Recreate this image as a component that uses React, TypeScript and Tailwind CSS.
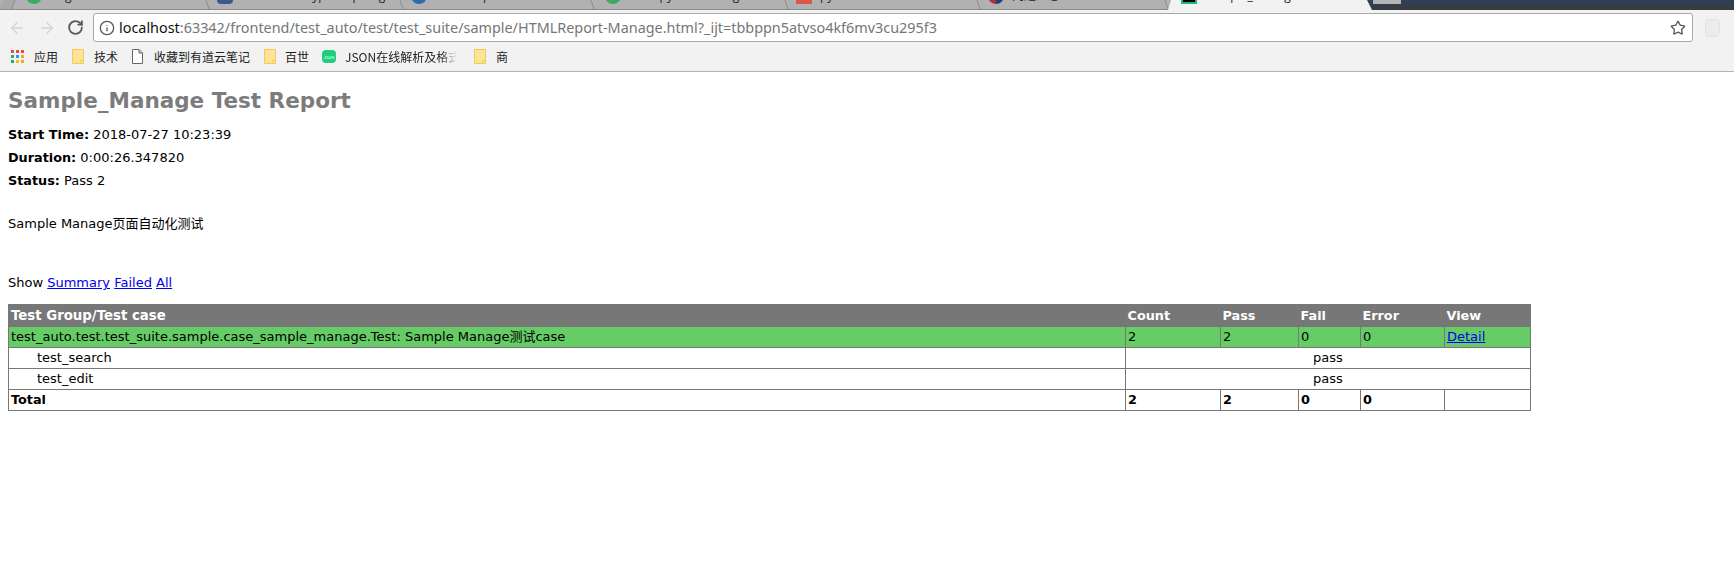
import { ArrowLeft, ArrowRight, Info, RotateCw, Star } from 'lucide-react';

const tabs = [
  { width: 'w-[196px]', pad: 'pl-[14px]', icon: 'bg-[#3dab5b] rounded-full', title: 'Angular' },
  { width: 'w-[194px]', pad: 'pl-[9px]', icon: 'bg-[#3a5a8c] rounded-sm', title: 'Handbook: TypeScript Cfg' },
  { width: 'w-[191px]', pad: 'pl-[9px]', icon: 'bg-[#2d6ca8] rounded-full', title: 'Bootstrap' },
  { width: 'w-[194px]', pad: 'pl-[12px]', icon: 'bg-[#3dab5b] rounded-full', title: '5000.py and Settings' },
  { width: 'w-[192px]', pad: 'pl-[9px]', icon: 'bg-[#d9584a]', title: 'py' },
  { width: 'w-[188px]', pad: 'pl-[9px]', icon: 'bg-[linear-gradient(90deg,#b0303a_50%,#1d3f7a_50%)] rounded-full', title: '问题汇总' },
];

function Folder() {
  return (
    <svg width="12" height="15" viewBox="0 0 12 15" className="shrink-0">
      <path d="M.5.5h11v14H.5z" fill="#fde395" stroke="#f0cc5c" />
      <path d="M8.5 14.5v-3h3" fill="none" stroke="#f0cc5c" />
    </svg>
  );
}

function AppsGrid() {
  const colors = [
    '#ea4a4a', '#ea4a4a', '#ea4a4a',
    '#34a868', '#3b8ef0', '#f5a623',
    '#34a868', '#fbbc05', '#f5a623',
  ];
  return (
    <div className="grid w-[13px] shrink-0 grid-cols-3 gap-[2px]">
      {colors.map((color, i) => (
        <span key={i} className="h-[3px]" style={{ backgroundColor: color }} />
      ))}
    </div>
  );
}

function TabStrip() {
  return (
    <div className="flex h-[10px] overflow-hidden text-[12px] leading-[14px] text-[#222] [font-family:'Open_Sans','Noto_Sans_CJK_SC',sans-serif]">
      <div className="flex w-[1168px] shrink-0 border-b border-[#8a8a8a] bg-[#b1b1b3]">
        <div className="w-[12px] shrink-0 origin-bottom -skew-x-[20deg] border-r border-[#8c8c8c] bg-[#a9a9a9]" />
        {tabs.map((tab) => (
          <div key={tab.title} className={`relative flex shrink-0 items-start gap-[8px] ${tab.width} ${tab.pad}`}>
            <span className={`-mt-[12px] size-[16px] shrink-0 ${tab.icon}`} />
            <span className="-mt-[11px] whitespace-nowrap">{tab.title}</span>
            <span className="absolute top-0 right-0 h-full w-px skew-x-[20deg] bg-[#8c8c8c]" />
          </div>
        ))}
      </div>
      <div className="w-[204px] shrink-0 bg-[linear-gradient(90deg,#b1b1b3_50%,#35404f_50%)]">
        <div className="flex h-full items-start gap-[9px] bg-[#f2f2f2] pl-[13px] [clip-path:polygon(0_100%,3px_0,calc(100%_-_5px)_0,100%_100%)]">
          <span className="-mt-[12px] box-border size-[16px] shrink-0 border-2 border-[#1fb58f] bg-black" />
          <span className="-mt-[11px] whitespace-nowrap">Sample_Manage</span>
        </div>
      </div>
      <div className="flex min-w-0 flex-1 bg-[linear-gradient(180deg,#2e4058,#3b3b3b)]">
        <div className="ml-[1px] h-[4px] w-[28px] bg-[#b4b4b6]" />
      </div>
    </div>
  );
}

function AddressBar() {
  return (
    <div className="flex h-[32px] items-end bg-[#f2f2f2]">
      <div className="flex h-[29px] w-[93px] shrink-0 items-center pl-[8px]">
        <ArrowLeft size={18} strokeWidth={2.2} color="#d6d6d6" />
        <ArrowRight size={18} strokeWidth={2.2} color="#d6d6d6" className="ml-[12px]" />
        <RotateCw size={17} strokeWidth={2.6} color="#5a5a5a" className="ml-[11px]" />
      </div>
      <div className="flex h-[29px] w-[1600px] items-center rounded-[3px] border border-[#a9a9a9] bg-white pr-[6px] pl-[5px]">
        <Info size={16} strokeWidth={2} color="#5a5a5a" className="shrink-0" />
        <span className="ml-[4px] whitespace-nowrap text-[14.4px] text-[#767676] [font-family:'Noto_Sans',sans-serif]">
          <span className="text-[#111]">localhost</span>:63342/frontend/test_auto/test/test_suite/sample/HTMLReport-Manage.html?_ijt=tbbppn5atvso4kf6mv3cu295f3
        </span>
        <Star size={16} strokeWidth={2} color="#5a5a5a" className="ml-auto shrink-0" />
      </div>
      <div className="mb-[5px] ml-[12px] h-[18px] w-[15px] rounded-[3px] rounded-br-[6px] border border-[#e2e2e2] bg-[#ececec]" />
    </div>
  );
}

function BookmarksBar() {
  return (
    <div className="flex h-[30px] items-center border-b border-[#b4b4b4] bg-[#f2f2f2] pl-[11px] text-[12px] text-[#222] [font-family:'Noto_Sans_CJK_SC',sans-serif]">
      <AppsGrid />
      <span className="ml-[10px] w-[24px]">应用</span>
      <span className="ml-[14px]"><Folder /></span>
      <span className="ml-[10px] w-[24px]">技术</span>
      <svg width="11" height="15" viewBox="0 0 11 15" className="ml-[14px] shrink-0">
        <path d="M.5.5h6.5l3.500 3.500v10.500h-10zM7 .5v3.500h3.500" fill="#fff" stroke="#666" />
      </svg>
      <span className="ml-[11px] w-[96px] whitespace-nowrap">收藏到有道云笔记</span>
      <span className="ml-[14px]"><Folder /></span>
      <span className="ml-[9px] w-[24px]">百世</span>
      <span className="ml-[13px] flex h-[13px] w-[14px] shrink-0 items-center justify-center rounded-[4px] bg-[#1fcf7c] text-[4px] text-white">JSON</span>
      <span className="ml-[9px] w-[112px] overflow-hidden whitespace-nowrap [mask-image:linear-gradient(90deg,#000_85%,transparent)]">JSON在线解析及格式化</span>
      <span className="ml-[17px]"><Folder /></span>
      <span className="ml-[10px]">商</span>
    </div>
  );
}

const cell = 'border border-[#777] px-[2px] py-0 align-middle';

function ReportTable() {
  return (
    <table className="mt-[12px] w-[1522px] table-fixed border-collapse border border-[#777] text-[13px] leading-[18px] text-black">
      <colgroup>
        <col className="w-[1117px]" />
        <col className="w-[95px]" />
        <col className="w-[78px]" />
        <col className="w-[62px]" />
        <col className="w-[84px]" />
        <col className="w-[86px]" />
      </colgroup>
      <thead>
        <tr className="h-[22px] bg-[#777] text-[12.8px] font-bold text-white">
          <td className="px-[2px] text-[13.3px]">Test Group/Test case</td>
          <td className="px-[2px]">Count</td>
          <td className="px-[2px]">Pass</td>
          <td className="px-[2px]">Fail</td>
          <td className="px-[2px]">Error</td>
          <td className="px-[2px]">View</td>
        </tr>
      </thead>
      <tbody>
        <tr className="h-[21px] bg-[#66cc66]">
          <td className={cell}>test_auto.test.test_suite.sample.case_sample_manage.Test: Sample Manage测试case</td>
          <td className={cell}>2</td>
          <td className={cell}>2</td>
          <td className={cell}>0</td>
          <td className={cell}>0</td>
          <td className={cell}><a href="#detail" className="text-[#0000ee] underline">Detail</a></td>
        </tr>
        {['test_search', 'test_edit'].map((name) => (
          <tr key={name} className="h-[21px]">
            <td className={`${cell} pl-[28px]`}>{name}</td>
            <td colSpan={5} className={`${cell} text-center`}>pass</td>
          </tr>
        ))}
        <tr className="h-[21px] text-[12.8px] font-bold">
          <td className={cell}>Total</td>
          <td className={cell}>2</td>
          <td className={cell}>2</td>
          <td className={cell}>0</td>
          <td className={cell}>0</td>
          <td className={cell}>&nbsp;</td>
        </tr>
      </tbody>
    </table>
  );
}

function Report() {
  return (
    <div className="px-[8px] text-[13px] leading-[18px] text-black [font-family:'DejaVu_Sans','Noto_Sans_CJK_SC',sans-serif]">
      <h1 className="pt-[16px] text-[21.5px] leading-[26px] font-bold text-[#7c7c7c]">Sample_Manage Test Report</h1>
      <p className="mt-[12px]"><b className="text-[12.8px]">Start Time:</b> 2018-07-27 10:23:39</p>
      <p className="mt-[5px]"><b className="text-[12.8px]">Duration:</b> 0:00:26.347820</p>
      <p className="mt-[5px]"><b className="text-[12.8px]">Status:</b> Pass 2</p>
      <p className="mt-[25px]">Sample Manage页面自动化测试</p>
      <p className="mt-[41px]">
        Show{' '}
        <a href="#summary" className="text-[#0000ee] underline">Summary</a>{' '}
        <a href="#failed" className="text-[#0000ee] underline">Failed</a>{' '}
        <a href="#all" className="text-[#0000ee] underline">All</a>
      </p>
      <ReportTable />
    </div>
  );
}

export default function App() {
  return (
    <div className="h-[577px] w-[1734px] overflow-hidden bg-white">
      <TabStrip />
      <AddressBar />
      <BookmarksBar />
      <Report />
    </div>
  );
}
